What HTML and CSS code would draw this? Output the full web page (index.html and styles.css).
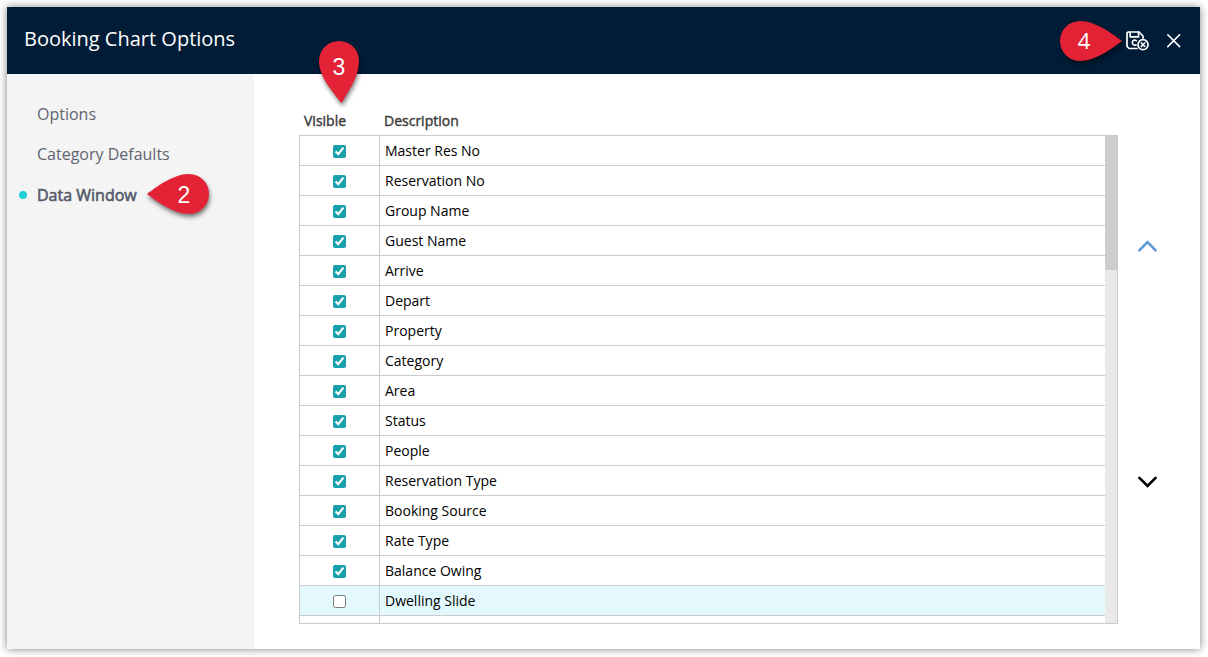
FILE: index.html
```
<!DOCTYPE html>
<html lang="en">
<head>
    <meta charset="UTF-8">
    <meta name="viewport" content="width=device-width, initial-scale=1.0">
    <title>Booking Chart Options</title>
    <link rel="stylesheet" href="styles.css">
</head>
<body>
    <div class="dialog">
        <header class="dialog-header">
            <h1>Booking Chart Options</h1>
            <div class="header-actions">
                <button class="icon-btn" aria-label="Save and close">
                    <svg width="24" height="20" viewBox="0 0 24 20" fill="none" stroke="#fff" stroke-width="1.7" stroke-linecap="round" stroke-linejoin="round">
                        <path d="M11 17.5H3.2L1 15.3V2.5C1 1.6 1.6 1 2.5 1H13L17 5V7"/>
                        <path d="M4.2 1.2V5.8H12.5V1.2"/>
                        <path d="M10.3 9.6C8.7 8.6 6.3 9.2 6.3 11.6C6.3 13.8 8.4 14.7 10 13.9"/>
                        <circle cx="17" cy="13.7" r="5"/>
                        <path d="M15.3 12L18.7 15.4M18.7 12L15.3 15.4"/>
                    </svg>
                </button>
                <button class="icon-btn" aria-label="Close">
                    <svg width="14" height="14" viewBox="0 0 14 14" stroke="#fff" stroke-width="1.6" stroke-linecap="round">
                        <path d="M0.8 0.8L12.6 12.6M12.6 0.8L0.8 12.6"/>
                    </svg>
                </button>
            </div>
        </header>

        <div class="dialog-body">
            <nav class="sidebar">
                <a class="nav-item">Options</a>
                <a class="nav-item">Category Defaults</a>
                <a class="nav-item active">Data Window</a>
            </nav>

            <main class="content">
                <div class="grid">
                    <div class="grid-head">
                        <span class="col-visible">Visible</span>
                        <span class="col-desc">Description</span>
                    </div>
                    <div class="grid-box">
                        <div class="grid-rows" id="gridRows"></div>
                        <div class="scrollbar"><div class="thumb"></div></div>
                    </div>
                </div>
                <div class="movers">
                    <svg width="20" height="12" viewBox="0 0 20 12" fill="none" stroke="#5b9bd5" stroke-width="2.6" stroke-linecap="round">
                        <path d="M1.4 10.3L9.5 2.2L17.6 10.3"/>
                    </svg>
                    <svg width="20" height="12" viewBox="0 0 20 12" fill="none" stroke="#000" stroke-width="2.6" stroke-linecap="round">
                        <path d="M1.4 1.9L9.5 10L17.6 1.9"/>
                    </svg>
                </div>
            </main>
        </div>
    </div>

    <!-- Step markers -->
    <div class="pin pin-2">
        <svg width="62" height="40" viewBox="0 0 62 40"><path d="M0 20C8 14 26 0 42 0A20 20 0 0 1 42 40C26 40 8 26 0 20Z"/></svg>
        <span>2</span>
    </div>
    <div class="pin pin-3">
        <svg width="40" height="62" viewBox="0 0 40 62"><path d="M22.5 62C14 51 0 36 0 20A20 20 0 0 1 40 20C40 36 29 51 22.5 62Z"/></svg>
        <span>3</span>
    </div>
    <div class="pin pin-4">
        <svg width="62" height="40" viewBox="0 0 62 40"><path d="M62 20C54 14 36 0 20 0A20 20 0 0 0 20 40C36 40 54 26 62 20Z"/></svg>
        <span>4</span>
    </div>

    <script>
        const columns = [
            'Master Res No', 'Reservation No', 'Group Name', 'Guest Name',
            'Arrive', 'Depart', 'Property', 'Category', 'Area', 'Status',
            'People', 'Reservation Type', 'Booking Source', 'Rate Type',
            'Balance Owing', 'Dwelling Slide'
        ];
        const selected = 'Dwelling Slide';
        const gridRows = document.getElementById('gridRows');

        columns.forEach((name) => {
            const row = document.createElement('div');
            row.className = name === selected ? 'row selected' : 'row';
            row.innerHTML = `
                <div class="cell-check"><input type="checkbox" ${name === selected ? '' : 'checked'}></div>
                <div class="cell-desc">${name}</div>
            `;
            gridRows.appendChild(row);
        });

        // Empty row, cut off by the bottom of the grid
        const rest = document.createElement('div');
        rest.className = 'row';
        rest.innerHTML = '<div class="cell-check"></div><div class="cell-desc"></div>';
        gridRows.appendChild(rest);
    </script>
</body>
</html>
```

FILE: styles.css
```
* {
    box-sizing: border-box;
}

body {
    margin: 0;
    padding: 7px;
    height: 657px;
    overflow: hidden;
    background: #fff;
    font-family: "Open Sans", sans-serif;
    font-size: 14px;
    color: #000;
}

.dialog {
    display: flex;
    flex-direction: column;
    width: 1193px;
    height: 642px;
    background: #fff;
    box-shadow: 0 0 8px rgba(0, 0, 0, 0.5);
}

.dialog-header {
    display: flex;
    justify-content: space-between;
    height: 67px;
    padding: 0 19px 0 17px;
    background: #001c36;
}

h1 {
    margin: 0;
    font-size: 20px;
    font-weight: 400;
    line-height: 64px;
    color: #fff;
}

.header-actions {
    display: flex;
    align-items: center;
    gap: 17px;
}

.icon-btn {
    display: flex;
    padding: 0;
    border: none;
    background: none;
    cursor: pointer;
}

.dialog-body {
    display: flex;
    flex: 1;
    min-height: 0;
}

.sidebar {
    width: 247px;
    padding-top: 20px;
    background: #f4f4f4;
}

.nav-item {
    display: flex;
    align-items: center;
    height: 40px;
    padding-left: 30px;
    font-size: 16px;
    color: #5f6472;
}

.nav-item.active {
    gap: 10px;
    height: 42px;
    padding-left: 12px;
    color: #545a6b;
    -webkit-text-stroke: 0.6px #545a6b;
}

.nav-item.active::before {
    content: "";
    width: 8px;
    height: 8px;
    border-radius: 50%;
    background: #1fcfd6;
}

.content {
    display: flex;
    gap: 20px;
    padding: 33px 0 0 45px;
}

.grid {
    width: 819px;
}

.grid-head {
    display: flex;
    height: 28px;
    line-height: 28px;
    color: #3a3a3a;
    -webkit-text-stroke: 0.4px #3a3a3a;
}

.col-visible {
    width: 85px;
    padding-left: 5px;
}

.grid-box {
    display: flex;
    height: 489px;
    border: 1px solid #cbcbcb;
    overflow: hidden;
}

.grid-rows {
    flex: 1;
}

.row {
    display: flex;
    height: 30px;
    border-bottom: 1px solid #cbcbcb;
}

.row.selected {
    background: #e3f9fe;
}

.cell-check {
    display: flex;
    align-items: center;
    justify-content: center;
    width: 80px;
    padding-top: 2px;
    border-right: 1px solid #cbcbcb;
}

.cell-check input {
    width: 13px;
    height: 13px;
    margin: 0;
    accent-color: #1a9fad;
}

.cell-desc {
    padding-left: 5px;
    line-height: 29px;
}

.scrollbar {
    width: 12px;
    background: #e9e9e9;
}

.thumb {
    height: 134px;
    background: #cdcdcd;
}

.movers {
    display: flex;
    flex-direction: column;
    gap: 224px;
    padding-top: 133px;
}

.pin {
    position: absolute;
    color: #fff;
    font-size: 23px;
    line-height: 40px;
}

.pin svg {
    display: block;
    fill: #e32235;
    filter: drop-shadow(1px 3px 2px rgba(0, 0, 0, 0.5));
}

.pin span {
    position: absolute;
    top: 0;
    width: 40px;
    text-align: center;
}

.pin-2 {
    left: 147px;
    top: 174px;
    font-family: "Liberation Sans", Arial, sans-serif;
}

.pin-2 span {
    left: 17px;
    top: 1px;
}

.pin-3 {
    left: 319px;
    top: 41px;
    font-family: "Liberation Sans", Arial, sans-serif;
}

.pin-3 span {
    left: 0;
    top: 6px;
}

.pin-4 {
    left: 1060px;
    top: 21px;
    font-size: 22px;
}

.pin-4 span {
    left: 4px;
    top: -1px;
}
```
